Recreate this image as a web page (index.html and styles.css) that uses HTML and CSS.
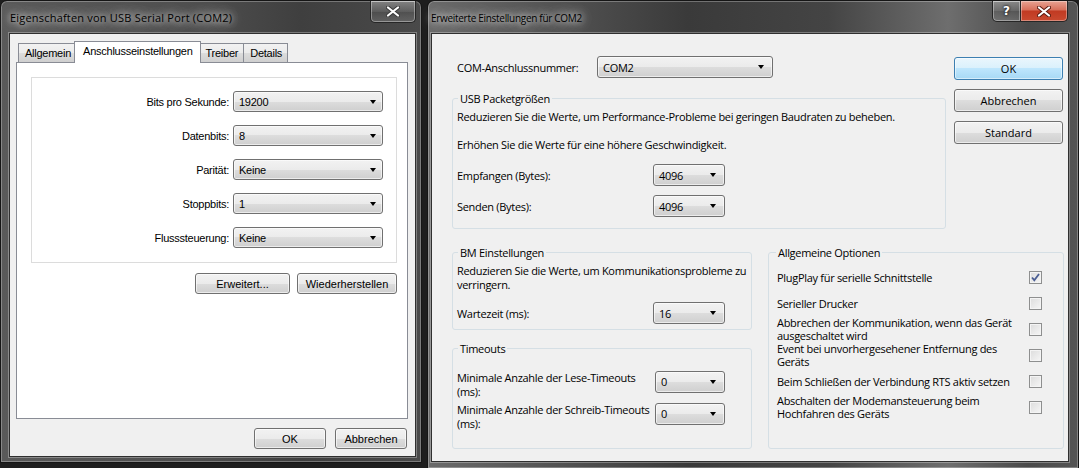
FILE: index.html
```html
<!DOCTYPE html>
<html lang="de">
<head>
  <meta charset="UTF-8" />
  <title>Eigenschaften von USB Serial Port (COM2)</title>
  <link rel="stylesheet" href="styles.css">
</head>
<body>
  <div class="desktop">

    <div class="window win-props">
      <div class="titlebar">
        <div class="title">Eigenschaften von USB Serial Port (COM2)</div>
        <div class="caption-buttons">
          <div class="cap-btn cap-close inactive">
            <svg width="14" height="11" viewBox="0 0 14 11"><path d="M2 1.5 L12 9.5 M12 1.5 L2 9.5" stroke="#3a3a3a" stroke-width="4" stroke-linecap="round"/><path d="M2 1.5 L12 9.5 M12 1.5 L2 9.5" stroke="#fff" stroke-width="2.2" stroke-linecap="round"/></svg>
          </div>
        </div>
      </div>
      <div class="client">
        <div class="tabs">
          <div class="tab">Allgemein</div>
          <div class="tab active">Anschlusseinstellungen</div>
          <div class="tab">Treiber</div>
          <div class="tab">Details</div>
        </div>
        <div class="tab-panel">
          <div class="port-box">
            <div class="port-row"><label>Bits pro Sekunde:</label><div class="combo">19200<span class="arrow"></span></div></div>
            <div class="port-row"><label>Datenbits:</label><div class="combo">8<span class="arrow"></span></div></div>
            <div class="port-row"><label>Parität:</label><div class="combo">Keine<span class="arrow"></span></div></div>
            <div class="port-row"><label>Stoppbits:</label><div class="combo">1<span class="arrow"></span></div></div>
            <div class="port-row"><label>Flusssteuerung:</label><div class="combo">Keine<span class="arrow"></span></div></div>
          </div>
          <div class="panel-buttons">
            <button class="btn btn-erweitert">Erweitert...</button>
            <button class="btn btn-wieder">Wiederherstellen</button>
          </div>
        </div>
        <div class="dialog-buttons">
          <button class="btn btn-small">OK</button>
          <button class="btn btn-small">Abbrechen</button>
        </div>
      </div>
    </div>

    <div class="window win-adv">
      <div class="titlebar">
        <div class="title">Erweiterte Einstellungen für COM2</div>
        <div class="caption-buttons">
          <div class="cap-btn cap-help">?</div>
          <div class="cap-btn cap-close">
            <svg width="14" height="11" viewBox="0 0 14 11"><path d="M2 1.5 L12 9.5 M12 1.5 L2 9.5" stroke="#5a1a10" stroke-width="4" stroke-linecap="round"/><path d="M2 1.5 L12 9.5 M12 1.5 L2 9.5" stroke="#fff" stroke-width="2.2" stroke-linecap="round"/></svg>
          </div>
        </div>
      </div>
      <div class="client adv-client">
        <div class="adv-top">
          <div class="adv-left">
            <div class="com-row">
              <label>COM-Anschlussnummer:</label>
              <div class="combo combo-com">COM2<span class="arrow"></span></div>
            </div>
            <fieldset class="group group-usb">
              <legend>USB Packetgrößen</legend>
              <p class="note">Reduzieren Sie die Werte, um Performance-Probleme bei geringen Baudraten zu beheben.</p>
              <p class="note note-gap">Erhöhen Sie die Werte für eine höhere Geschwindigkeit.</p>
              <div class="field-row row-first"><label>Empfangen (Bytes):</label><div class="combo combo-small">4096<span class="arrow"></span></div></div>
              <div class="field-row"><label>Senden (Bytes):</label><div class="combo combo-small">4096<span class="arrow"></span></div></div>
            </fieldset>
          </div>
          <div class="adv-buttons">
            <button class="btn btn-side btn-default">OK</button>
            <button class="btn btn-side">Abbrechen</button>
            <button class="btn btn-side">Standard</button>
          </div>
        </div>

        <div class="adv-bottom">
          <div class="adv-left-bottom">
            <fieldset class="group group-bm">
              <legend>BM Einstellungen</legend>
              <p class="note">Reduzieren Sie die Werte, um Kommunikationsprobleme zu<br>verringern.</p>
              <div class="field-row row-wait"><label>Wartezeit (ms):</label><div class="combo combo-small">16<span class="arrow"></span></div></div>
            </fieldset>
            <fieldset class="group group-timeouts">
              <legend>Timeouts</legend>
              <div class="timeout-row row-first"><label>Minimale Anzahle der Lese-Timeouts<br>(ms):</label><div class="combo combo-small">0<span class="arrow"></span></div></div>
              <div class="timeout-row"><label>Minimale Anzahle der Schreib-Timeouts<br>(ms):</label><div class="combo combo-small">0<span class="arrow"></span></div></div>
            </fieldset>
          </div>
          <fieldset class="group group-options">
            <legend>Allgemeine Optionen</legend>
            <div class="option"><span>PlugPlay für serielle Schnittstelle</span><span class="check checked"><svg width="11" height="11" viewBox="0 0 11 11"><path d="M2 5.5 L4.3 8.2 L9 2" fill="none" stroke="#4b5e93" stroke-width="1.8"/></svg></span></div>
            <div class="option"><span>Serieller Drucker</span><span class="check"></span></div>
            <div class="option"><span>Abbrechen der Kommunikation, wenn das Gerät<br>ausgeschaltet wird</span><span class="check"></span></div>
            <div class="option"><span>Event bei unvorhergesehener Entfernung des<br>Geräts</span><span class="check"></span></div>
            <div class="option"><span>Beim Schließen der Verbindung RTS aktiv setzen</span><span class="check"></span></div>
            <div class="option"><span>Abschalten der Modemansteuerung beim<br>Hochfahren des Geräts</span><span class="check"></span></div>
          </fieldset>
        </div>
      </div>
    </div>

  </div>
</body>
</html>
```

FILE: styles.css
```css
html, body {
  margin: 0;
  padding: 0;
  height: 100%;
  background-color: #1e1e1e;
}

.desktop {
  display: flex;
  gap: 5px;
  width: 1079px;
  height: 468px;
  overflow: hidden;
}

/* window frames */
.window {
  box-sizing: border-box;
  border: 1px solid #151515;
  border-radius: 7px 7px 0 0;
  box-shadow: inset 0 0 0 1px rgba(255, 255, 255, 0.28);
  display: flex;
  flex-direction: column;
}

.win-props {
  width: 422px;
  height: 463px;
  background: linear-gradient(to right, #5a5a5a 0, #4e4e4e 200px, #3f3f3f 300px, #4a4a4a 422px);
}

.win-adv {
  width: 652px;
  height: 468px;
  border-bottom: none;
  background: linear-gradient(to right, #6a6a6a 0, #565656 110px, #3a3a3a 260px, #444 400px, #6e6e6e 520px, #4a4a4a 600px, #555 652px);
}

.titlebar {
  height: 32px;
  flex: none;
  display: flex;
  justify-content: space-between;
  align-items: flex-start;
  padding: 0 5px 0 9px;
}

.win-adv .titlebar {
  padding: 0 10px 0 3px;
}

.title {
  margin-top: 9px;
  font-family: "Open Sans", sans-serif;
  font-size: 11px;
  letter-spacing: 0.2px;
  color: #000;
  text-shadow: 0 0 6px rgba(255, 255, 255, 0.9), 0 0 12px rgba(255, 255, 255, 0.7), 0 0 18px rgba(255, 255, 255, 0.5);
}

.win-adv .title {
  margin-top: 10px;
  font-size: 10px;
  letter-spacing: -0.3px;
}

.caption-buttons {
  display: flex;
}

.cap-btn {
  height: 20px;
  display: flex;
  align-items: center;
  justify-content: center;
  border: 1px solid #262626;
  border-top: none;
  box-shadow: inset 0 0 0 1px rgba(255, 255, 255, 0.35);
  background: linear-gradient(to bottom, rgba(255, 255, 255, 0.32), rgba(255, 255, 255, 0.12) 50%, rgba(255, 255, 255, 0.04) 51%, rgba(255, 255, 255, 0.14));
}

.cap-btn:first-child {
  border-bottom-left-radius: 5px;
}

.cap-btn:last-child {
  border-bottom-right-radius: 5px;
}

.cap-close {
  width: 46px;
}

.cap-close.inactive {
  width: 44px;
  height: 21px;
}

.win-adv .cap-close {
  background: linear-gradient(to bottom, #e8a393 0, #d76f5a 45%, #c13a22 50%, #c94a30 100%);
  border-left: none;
}

.cap-help {
  width: 27px;
  font-family: "DejaVu Sans", sans-serif;
  font-weight: bold;
  font-size: 12px;
  color: #fff;
  text-shadow: 0 0 2px #222, 0 0 3px #222;
}

.client {
  flex: 1;
  margin: 0 5px 5px 8px;
  border: 1px solid #2f2f2f;
  background-color: #f0f0f0;
  box-shadow: 0 0 0 1px rgba(255, 255, 255, 0.3);
  font-family: "Liberation Sans", Arial, sans-serif;
  font-size: 11px;
  letter-spacing: -0.25px;
  color: #000;
  display: flex;
  flex-direction: column;
  padding: 7px 7px 7px 6px;
}

/* tabs */
.tabs {
  display: flex;
  align-items: flex-end;
  padding-left: 2px;
  height: 21px;
  position: relative;
  z-index: 1;
}

.tab {
  height: 19px;
  box-sizing: border-box;
  padding: 3px 5px 0 6px;
  border: 1px solid #898c95;
  border-bottom: none;
  border-right: none;
  background: linear-gradient(to bottom, #f2f2f2, #ebebeb 50%, #dddddd 50%, #cfcfcf);
}

.tab:nth-child(4) {
  border-right: 1px solid #898c95;
}

.tab.active {
  height: 22px;
  margin: 0 -2px -1px;
  padding: 3px 7px 0 8px;
  background: #fff;
  border-right: 1px solid #898c95;
  position: relative;
  z-index: 2;
}

.tab.active + .tab {
  border-left: none;
  padding-left: 7px;
}

.tab-panel {
  height: 357px;
  box-sizing: border-box;
  background: #fff;
  border: 1px solid #898c95;
  padding: 14px 10px 0 14px;
}

.port-box {
  border: 1px solid #dcdcdc;
  padding: 13px 13px 14px 0;
  display: flex;
  flex-direction: column;
  gap: 13px;
}

.port-row {
  display: grid;
  grid-template-columns: 1fr 150px;
  gap: 4px;
  align-items: center;
}

.port-row label {
  text-align: right;
}

.combo {
  height: 21px;
  box-sizing: border-box;
  display: flex;
  align-items: center;
  justify-content: space-between;
  padding: 0 6px 0 5px;
  border: 1px solid #707070;
  border-radius: 3px;
  background: linear-gradient(to bottom, #f2f2f2, #ebebeb 50%, #dddddd 50%, #cfcfcf);
  box-shadow: inset 0 0 0 1px rgba(255, 255, 255, 0.6);
}

.arrow {
  width: 0;
  height: 0;
  border-left: 3.5px solid transparent;
  border-right: 3.5px solid transparent;
  border-top: 4px solid #000;
}

.panel-buttons {
  display: flex;
  justify-content: flex-end;
  gap: 7px;
  margin-top: 10px;
}

.btn {
  height: 21px;
  box-sizing: border-box;
  padding: 0;
  font: inherit;
  color: #000;
  border: 1px solid #707070;
  border-radius: 3px;
  background: linear-gradient(to bottom, #f2f2f2, #ebebeb 50%, #dddddd 50%, #cfcfcf);
  box-shadow: inset 0 0 0 1px rgba(255, 255, 255, 0.6);
}

.btn-erweitert {
  width: 95px;
}

.btn-wieder {
  width: 100px;
}

.dialog-buttons {
  display: flex;
  justify-content: flex-end;
  gap: 9px;
  margin-top: 9px;
  padding-right: 1px;
}

.btn-small {
  width: 72px;
}

/* advanced settings dialog */
.adv-client {
  margin: 0 9px 6px 3px;
  padding: 22px 0 0 20px;
  font-family: "Open Sans", sans-serif;
  font-size: 11px;
  letter-spacing: -0.3px;
}

.adv-top {
  display: flex;
  gap: 8px;
}

.adv-left {
  width: 494px;
}

.com-row {
  display: flex;
  align-items: center;
  height: 22px;
}

.com-row label {
  width: 140px;
  padding-left: 5px;
}

.combo-com {
  width: 176px;
  height: 22px;
  padding-right: 8px;
}

.adv-buttons {
  display: flex;
  flex-direction: column;
  gap: 9px;
  padding-top: 1px;
}

.btn-side {
  width: 109px;
  height: 23px;
}

.btn-default {
  border-color: #3c7fb1;
  background: linear-gradient(to bottom, #eaf6fd, #d9f0fc 50%, #bee6fd 50%, #a7d9f5);
  box-shadow: inset 0 0 0 1px rgba(255, 255, 255, 0.5);
}

.group {
  margin: 0;
  border: 1px solid #d5dfe5;
  border-radius: 3px;
  padding: 0 6px 9px 4px;
  min-width: 0;
}

.group legend {
  padding: 0 2px;
  margin-left: 1px;
  line-height: 15px;
}

.group-usb {
  margin-top: 13px;
  padding-bottom: 11px;
}

.note {
  margin: 3px 0 0;
  line-height: 15px;
  white-space: nowrap;
}

.note-gap {
  margin-top: 13px;
}

.field-row {
  display: flex;
  align-items: center;
  margin-top: 9px;
}

.field-row.row-first {
  margin-top: 12px;
}

.field-row label {
  width: 196px;
}

.combo-small {
  width: 72px;
  height: 22px;
  padding-right: 8px;
}

.adv-bottom {
  display: flex;
  gap: 16px;
  margin-top: 16px;
}

.adv-left-bottom {
  width: 300px;
  display: flex;
  flex-direction: column;
  gap: 11px;
}

.group-bm {
  padding-bottom: 5px;
}

.group-bm .note {
  margin-top: 4px;
  line-height: 14px;
}

.field-row.row-wait {
  margin-top: 10px;
}

.group-timeouts {
  padding-bottom: 17px;
}

.timeout-row {
  display: flex;
  align-items: flex-start;
  margin-top: 4px;
  line-height: 14px;
}

.timeout-row.row-first {
  margin-top: 15px;
}

.timeout-row label {
  width: 198px;
  white-space: nowrap;
}

.timeout-row .combo-small {
  width: 70px;
}

.group-options {
  width: 296px;
  box-sizing: border-box;
  padding: 4px 21px 0 8px;
}

.group-options legend {
  margin-left: -1px;
}

.option {
  height: 26px;
  display: flex;
  align-items: center;
  justify-content: space-between;
  line-height: 13px;
  white-space: nowrap;
}

.check {
  width: 13px;
  height: 13px;
  box-sizing: border-box;
  flex: none;
  border: 1px solid #8e8f8f;
  background: linear-gradient(135deg, #dcdcdc, #f6f6f6);
  box-shadow: inset 0 0 0 1px #f4f4f4;
  display: flex;
  align-items: center;
  justify-content: center;
}
```
